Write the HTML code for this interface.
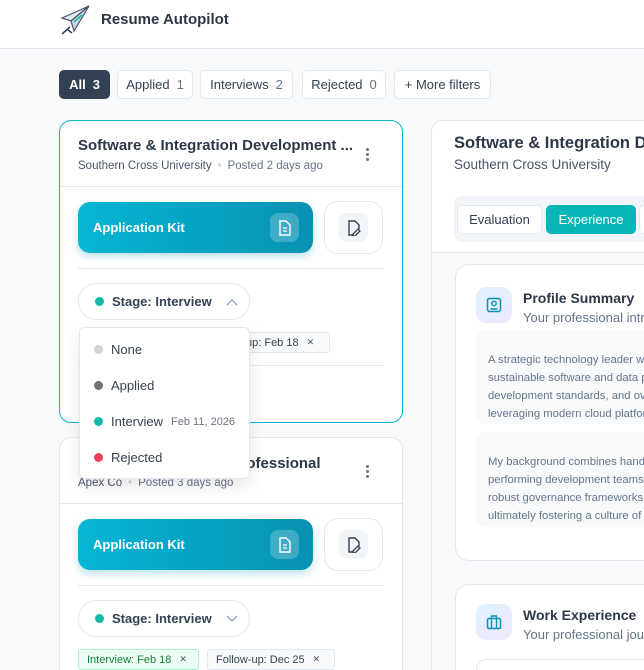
<!DOCTYPE html>
<html><head><meta charset="utf-8"><style>
*{box-sizing:border-box;margin:0;padding:0}
html,body{width:644px;height:670px;overflow:hidden}
body{background:#f8fafc;font-family:"Liberation Sans",sans-serif;color:#334155}
#w{position:relative;width:644px;height:670px;overflow:hidden}
.a{position:absolute}
.hdr{left:0;top:0;width:644px;height:49px;background:#fff;border-bottom:1px solid #e5e7eb}
.chip{top:70px;height:29px;border:1px solid #e2e8f0;border-radius:5px;background:#fff;font-size:13px;color:#334155;display:flex;align-items:center;justify-content:center;gap:7px}
.chip b{font-weight:normal;color:#64748b}
.card{background:#fff;border:1px solid #e5e7eb;border-radius:12px;overflow:hidden}
.open{border-bottom:none;border-bottom-left-radius:0;border-bottom-right-radius:0}
.ttl{font-size:15px;font-weight:bold;color:#2d3748;white-space:nowrap}
.sub{font-size:11.5px;color:#475569;white-space:nowrap}
.sub i{font-style:normal;color:#cbd5e1;margin:0 6px}
.sub span{color:#64748b}
.hr{height:1px;background:#e5e7eb}
.kit{width:235px;height:51px;border-radius:12px;background:linear-gradient(90deg,#06b6d4,#0891b2);box-shadow:0 4px 8px rgba(8,145,178,.25);color:#fff;font-weight:bold;font-size:13px;display:flex;align-items:center;padding-left:15px}
.kit .ic{position:absolute;right:14px;top:11px;width:29px;height:29px;border-radius:8px;background:rgba(255,255,255,.22);display:flex;align-items:center;justify-content:center}
.side{width:59px;height:53px;border:1px solid #e2e8f0;border-radius:14px;background:#fff;display:flex;align-items:center;justify-content:center}
.side div{width:29px;height:29px;border-radius:8px;background:#f1f5f9;display:flex;align-items:center;justify-content:center}
.pill{width:172px;height:37px;border:1px solid #e2e8f0;border-radius:19px;background:#fff;font-size:13px;font-weight:bold;color:#334155;display:flex;align-items:center;padding-left:16px}
.dot{width:9px;height:9px;border-radius:50%;display:inline-block;margin-right:8px}
.dots{width:3px}
.dots i{display:block;width:3px;height:3px;border-radius:50%;background:#64748b;margin-bottom:2px}
.tag{height:21px;border:1px solid #e2e8f0;border-radius:3px;background:#f8fafc;font-size:11px;color:#334155;display:flex;align-items:center;padding:0 8px;gap:8px;white-space:nowrap}
.tag s{text-decoration:none;font-size:9px;color:#475569}
.dd{left:79px;top:327px;width:171px;height:152px;background:#fff;border:1px solid #e2e8f0;border-radius:6px;box-shadow:0 6px 16px rgba(0,0,0,.1)}
.dd div{position:absolute;left:14px;font-size:13px;color:#374151;display:flex;align-items:center}
.ptxt{font-size:11.3px;line-height:18px;color:#64748b;white-space:nowrap;background:#f8fafc;border-radius:10px;padding:5px 12px;overflow:hidden}
.iconbox{width:36px;height:36px;border-radius:10px;background:linear-gradient(135deg,#e0f2fe,#ede9fe);display:flex;align-items:center;justify-content:center}
</style></head><body><div id="w">
<div class="a hdr"></div>
<svg class="a" style="left:60px;top:5px" width="31" height="30" viewBox="0 0 31 30"><path d="M29 1 L2 13 L11 16 Z" fill="#e2e8f0" stroke="#475569" stroke-width="1.2"/><path d="M29 1 L11 16 L14 26 Z" fill="#cbd5e1" stroke="#475569" stroke-width="1.2"/><path d="M14 17 L22 10" stroke="#14b8a6" stroke-width="1.5"/><path d="M10 22 L2 29 M8 25 L12 28" stroke="#334155" stroke-width="1.5"/></svg>
<div class="a" style="left:101px;top:11px;font-size:15px;font-weight:bold;color:#2d3748">Resume Autopilot</div>

<div class="a chip" style="left:59px;width:51px;background:#334155;border-color:#334155;color:#fff;font-weight:bold">All <b style="color:#fff;font-weight:bold">3</b></div>
<div class="a chip" style="left:117px;width:76px">Applied <b>1</b></div>
<div class="a chip" style="left:200px;width:93px">Interviews <b>2</b></div>
<div class="a chip" style="left:302px;width:84px">Rejected <b>0</b></div>
<div class="a chip" style="left:394px;width:97px">+ More filters</div>

<div class="a card" style="left:59px;top:120px;width:344px;height:303px;border-color:#06b6d4"></div>
<div class="a ttl" style="left:78px;top:137px">Software &amp; Integration Development ...</div>
<div class="a sub" style="left:78px;top:160px">Southern Cross University<i>•</i><span>Posted 2 days ago</span></div>
<div class="a dots" style="left:366px;top:148px"><i></i><i></i><i></i></div>
<div class="a hr" style="left:60px;top:186px;width:342px"></div>
<div class="a kit" style="left:78px;top:202px">Application Kit<div class="ic"><svg width="14" height="16" viewBox="0 0 14 16"><path d="M2 1h6l4 4v10H2z" fill="none" stroke="#fff" stroke-width="1.4"/><path d="M5 8h4M5 11h4" stroke="#fff" stroke-width="1.3"/></svg></div></div>
<div class="a side" style="left:324px;top:201px"><div><svg width="14" height="16" viewBox="0 0 14 16"><path d="M7 15H2V1h6l4 4v4" fill="none" stroke="#334155" stroke-width="1.4"/><path d="M6 14l5-5 2 2-5 5H6z" fill="none" stroke="#334155" stroke-width="1.3"/></svg></div></div>
<div class="a hr" style="left:78px;top:268px;width:306px"></div>
<div class="a pill" style="left:78px;top:283px"><span class="dot" style="background:#14b8a6"></span>Stage: Interview<svg style="margin-left:14px" width="12" height="8" viewBox="0 0 12 8"><path d="M1 7l5-5 5 5" fill="none" stroke="#94a3b8" stroke-width="1.3"/></svg></div>
<div class="a tag" style="left:215px;top:332px;width:115px;padding-left:30px">up: Feb 18 <s>✕</s></div>
<div class="a hr" style="left:78px;top:365px;width:306px"></div>

<div class="a card open" style="left:59px;top:437px;width:344px;height:233px"></div>
<div class="a ttl" style="left:98px;top:455px">Senior Integration Professional</div>
<div class="a sub" style="left:78px;top:477px">Apex Co<i>•</i><span>Posted 3 days ago</span></div>
<div class="a dots" style="left:366px;top:465px"><i></i><i></i><i></i></div>
<div class="a hr" style="left:60px;top:503px;width:342px"></div>
<div class="a kit" style="left:78px;top:519px">Application Kit<div class="ic"><svg width="14" height="16" viewBox="0 0 14 16"><path d="M2 1h6l4 4v10H2z" fill="none" stroke="#fff" stroke-width="1.4"/><path d="M5 8h4M5 11h4" stroke="#fff" stroke-width="1.3"/></svg></div></div>
<div class="a side" style="left:324px;top:518px"><div><svg width="14" height="16" viewBox="0 0 14 16"><path d="M7 15H2V1h6l4 4v4" fill="none" stroke="#334155" stroke-width="1.4"/><path d="M6 14l5-5 2 2-5 5H6z" fill="none" stroke="#334155" stroke-width="1.3"/></svg></div></div>
<div class="a hr" style="left:78px;top:585px;width:306px"></div>
<div class="a pill" style="left:78px;top:600px"><span class="dot" style="background:#14b8a6"></span>Stage: Interview<svg style="margin-left:14px" width="12" height="8" viewBox="0 0 12 8"><path d="M1 1l5 5 5-5" fill="none" stroke="#94a3b8" stroke-width="1.3"/></svg></div>
<div class="a tag" style="left:78px;top:649px;width:121px;background:#ecfdf5;border-color:#a7f3d0;color:#15803d">Interview: Feb 18 <s>✕</s></div>
<div class="a tag" style="left:207px;top:649px;width:128px">Follow-up: Dec 25 <s>✕</s></div>

<div class="a dd">
<div style="top:14px"><span class="dot" style="background:#d1d5db"></span>None</div>
<div style="top:50px"><span class="dot" style="background:#78716c"></span>Applied</div>
<div style="top:86px"><span class="dot" style="background:#14b8a6"></span>Interview<span style="font-size:11px;color:#6b7280;margin-left:8px">Feb 11, 2026</span></div>
<div style="top:122px"><span class="dot" style="background:#f43f5e"></span>Rejected</div>
</div>

<div class="a card open" style="left:431px;top:120px;width:213px;height:550px;border-right:none;border-top-right-radius:0"></div>
<div class="a" style="left:454px;top:134px;width:190px;overflow:hidden;font-size:16.5px;font-weight:bold;color:#2d3748;white-space:nowrap">Software &amp; Integration Development</div>
<div class="a" style="left:454px;top:157px;font-size:13.5px;color:#475569;white-space:nowrap">Southern Cross University</div>
<div class="a" style="left:454px;top:196px;width:190px;height:46px;background:#f1f5f9;border-radius:8px 0 0 8px"></div>
<div class="a" style="left:457px;top:205px;width:85px;height:29px;background:#fff;border:1px solid #e2e8f0;border-radius:5px;font-size:13px;color:#334155;display:flex;align-items:center;justify-content:center">Evaluation</div>
<div class="a" style="left:546px;top:205px;width:90px;height:29px;background:#06b6b6;border-radius:5px;font-size:13px;color:#fff;display:flex;align-items:center;justify-content:center">Experience</div>
<div class="a" style="left:639px;top:205px;width:5px;height:29px;background:#fff;border:1px solid #e2e8f0;border-right:none;border-radius:5px 0 0 5px"></div>
<div class="a hr" style="left:432px;top:252px;width:212px"></div>
<div class="a" style="left:432px;top:253px;width:212px;height:417px;background:#f8fafc"></div>

<div class="a card" style="left:455px;top:264px;width:189px;height:297px;border-radius:14px 0 0 14px;border-right:none"></div>
<div class="a iconbox" style="left:476px;top:287px"><svg width="16" height="16" viewBox="0 0 16 16"><rect x="1.5" y="1.5" width="13" height="13" rx="2" fill="none" stroke="#0891b2" stroke-width="1.5"/><circle cx="8" cy="6.5" r="2.2" fill="none" stroke="#0891b2" stroke-width="1.4"/><path d="M4.5 12h7" stroke="#0891b2" stroke-width="1.5"/></svg></div>
<div class="a" style="left:523px;top:290px;font-size:14px;font-weight:bold;color:#2d3748;white-space:nowrap">Profile Summary</div>
<div class="a" style="left:523px;top:310px;width:121px;overflow:hidden;font-size:13px;color:#64748b;white-space:nowrap">Your professional introduction</div>
<div class="a ptxt" style="left:476px;top:330px;width:168px;height:94px;padding-top:21px;border-radius:10px 0 0 10px">A strategic technology leader with<br>sustainable software and data platforms<br>development standards, and overseeing<br>leveraging modern cloud platforms and<br>services.</div>
<div class="a ptxt" style="left:476px;top:432px;width:168px;height:95px;padding-top:21px;border-radius:10px 0 0 10px">My background combines hands-on<br>performing development teams and<br>robust governance frameworks and<br>ultimately fostering a culture of</div>

<div class="a card open" style="left:455px;top:584px;width:189px;height:86px;border-radius:14px 0 0 0;border-right:none"></div>
<div class="a iconbox" style="left:476px;top:604px"><svg width="16" height="16" viewBox="0 0 16 16"><rect x="1.5" y="4.5" width="13" height="10" rx="1.5" fill="none" stroke="#0891b2" stroke-width="1.5"/><path d="M5.5 4.5V2h5v2.5M5.5 4.5v10M10.5 4.5v10" fill="none" stroke="#0891b2" stroke-width="1.4"/></svg></div>
<div class="a" style="left:523px;top:607px;font-size:14px;font-weight:bold;color:#2d3748;white-space:nowrap">Work Experience</div>
<div class="a" style="left:523px;top:627px;width:121px;overflow:hidden;font-size:13px;color:#64748b;white-space:nowrap">Your professional journey</div>
<div class="a" style="left:476px;top:659px;width:168px;height:11px;border:1px solid #e2e8f0;border-bottom:none;border-right:none;border-radius:10px 0 0 0;background:#fff"></div>
</div></body></html>
